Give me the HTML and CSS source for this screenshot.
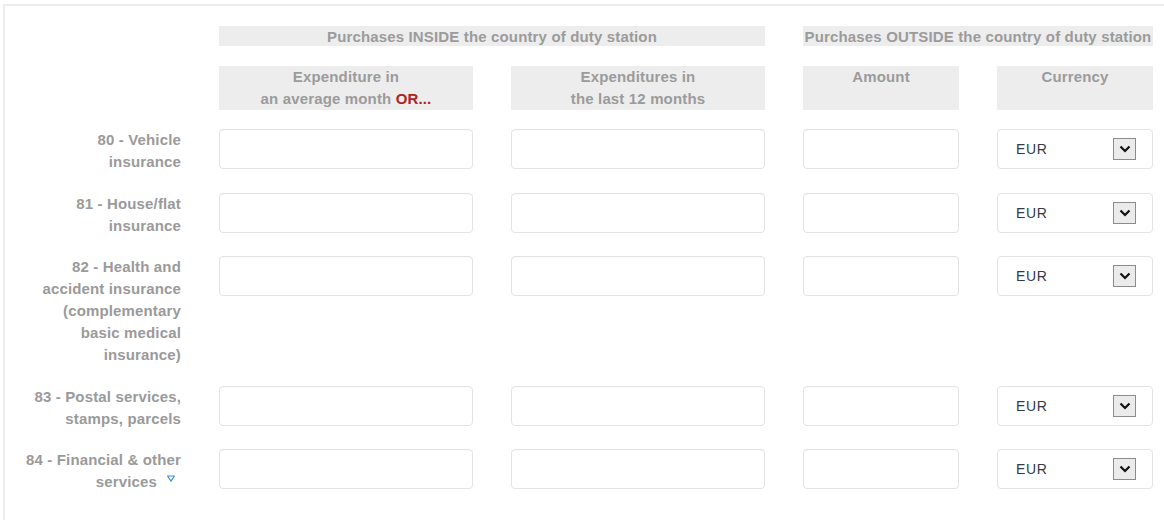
FILE: index.html
```html
<!DOCTYPE html>
<html lang="en">
<head>
<meta charset="utf-8">
<title>Insurance and services expenditure</title>
<link rel="stylesheet" href="styles.css">
</head>
<body>
<div class="panel">
  <div class="grid">
    <div class="cell-empty"></div>
    <div class="group-head inside">Purchases INSIDE the country of duty station</div>
    <div class="group-head outside">Purchases OUTSIDE the country of duty station</div>

    <div class="cell-empty"></div>
    <div class="sub-head">Expenditure in<br>an average month <span class="or">OR...</span></div>
    <div class="sub-head">Expenditures in<br>the last 12 months</div>
    <div class="sub-head">Amount</div>
    <div class="sub-head">Currency</div>

    <label class="row-label">80 - Vehicle insurance</label>
    <input class="field" type="text">
    <input class="field" type="text">
    <input class="field" type="text">
    <div class="select"><span class="select-value">EUR</span><span class="select-btn"><svg viewBox="0 0 12 8" width="12" height="8"><path d="M1.5 1.5 L6 6 L10.5 1.5" fill="none" stroke="#111" stroke-width="2.2"/></svg></span></div>

    <label class="row-label">81 - House/flat insurance</label>
    <input class="field" type="text">
    <input class="field" type="text">
    <input class="field" type="text">
    <div class="select"><span class="select-value">EUR</span><span class="select-btn"><svg viewBox="0 0 12 8" width="12" height="8"><path d="M1.5 1.5 L6 6 L10.5 1.5" fill="none" stroke="#111" stroke-width="2.2"/></svg></span></div>

    <label class="row-label">82 - Health and accident insurance (complementary basic medical insurance)</label>
    <input class="field" type="text">
    <input class="field" type="text">
    <input class="field" type="text">
    <div class="select"><span class="select-value">EUR</span><span class="select-btn"><svg viewBox="0 0 12 8" width="12" height="8"><path d="M1.5 1.5 L6 6 L10.5 1.5" fill="none" stroke="#111" stroke-width="2.2"/></svg></span></div>

    <label class="row-label">83 - Postal services, stamps, parcels</label>
    <input class="field" type="text">
    <input class="field" type="text">
    <input class="field" type="text">
    <div class="select"><span class="select-value">EUR</span><span class="select-btn"><svg viewBox="0 0 12 8" width="12" height="8"><path d="M1.5 1.5 L6 6 L10.5 1.5" fill="none" stroke="#111" stroke-width="2.2"/></svg></span></div>

    <label class="row-label">84 - Financial &amp; other services<svg class="hint" viewBox="0 0 8 7" width="8" height="7"><path d="M0.6 1 H7.4 L4 6.2 Z" fill="none" stroke="#3d8fdc" stroke-width="1.2" stroke-linejoin="round"/></svg></label>
    <input class="field" type="text">
    <input class="field" type="text">
    <input class="field" type="text">
    <div class="select"><span class="select-value">EUR</span><span class="select-btn"><svg viewBox="0 0 12 8" width="12" height="8"><path d="M1.5 1.5 L6 6 L10.5 1.5" fill="none" stroke="#111" stroke-width="2.2"/></svg></span></div>
  </div>
</div>
</body>
</html>
```

FILE: styles.css
```css
html, body {
  margin: 0;
  padding: 0;
  background: #ffffff;
}

body {
  font-family: "Liberation Sans", Arial, sans-serif;
  font-size: 15px;
  letter-spacing: 0.15px;
  color: #999999;
  overflow: hidden;
}

.panel {
  margin: 4px 0 0 3px;
  border-top: 2px solid #ececec;
  border-left: 2px solid #ececec;
  padding: 20px 0 40px 19px;
  min-height: 500px;
  box-sizing: border-box;
}

.grid {
  display: grid;
  grid-template-columns: 157px 254px 254px 156px 156px;
  column-gap: 38px;
  row-gap: 19.5px;
  align-items: start;
}

.group-head {
  background: #ededed;
  height: 20px;
  line-height: 21px;
  text-align: center;
  font-weight: bold;
  color: #9b9b9b;
  white-space: nowrap;
}

.group-head.inside {
  grid-column: 2 / 4;
}

.group-head.outside {
  grid-column: 4 / 6;
}

.sub-head {
  background: #ededed;
  height: 44px;
  line-height: 22px;
  text-align: center;
  font-weight: bold;
  color: #9b9b9b;
}

.sub-head .or {
  color: #b0231c;
}

.row-label {
  display: block;
  text-align: right;
  font-weight: bold;
  line-height: 22px;
  color: #9a9a9a;
}

.hint {
  margin: 0 6px 0 10px;
  vertical-align: 5px;
}

.field {
  display: block;
  box-sizing: border-box;
  width: 100%;
  height: 40px;
  margin: 0;
  border: 1px solid #e3e3e3;
  border-radius: 4px;
  background: #ffffff;
  box-shadow: inset 0 1px 1px rgba(0, 0, 0, 0.02);
  font: inherit;
  outline: none;
}

.select {
  box-sizing: border-box;
  height: 40px;
  border: 1px solid #e3e3e3;
  border-radius: 4px;
  background: #ffffff;
  display: flex;
  align-items: center;
  justify-content: space-between;
  padding: 0 16px 0 18px;
}

.select-value {
  color: #333a44;
  font-size: 14px;
  letter-spacing: 0.6px;
}

.select-btn {
  box-sizing: border-box;
  width: 23px;
  height: 22px;
  border: 1px solid #8c8c8c;
  background: #ebebeb;
  display: flex;
  align-items: center;
  justify-content: center;
}
```
